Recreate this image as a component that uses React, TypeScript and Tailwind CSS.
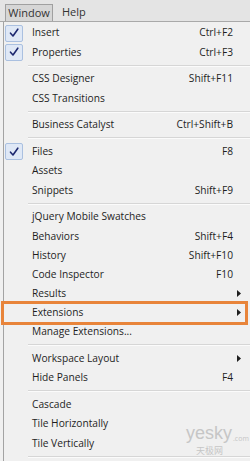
import React from "react";

type Item =
  | { sep: true }
  | { sep?: false; label: string; shortcut?: string; checked?: boolean; sub?: boolean; hl?: boolean };

const items: Item[] = [
  { label: "Insert", shortcut: "Ctrl+F2", checked: true },
  { label: "Properties", shortcut: "Ctrl+F3", checked: true },
  { sep: true },
  { label: "CSS Designer", shortcut: "Shift+F11" },
  { label: "CSS Transitions" },
  { sep: true },
  { label: "Business Catalyst", shortcut: "Ctrl+Shift+B" },
  { sep: true },
  { label: "Files", shortcut: "F8", checked: true },
  { label: "Assets" },
  { label: "Snippets", shortcut: "Shift+F9" },
  { sep: true },
  { label: "jQuery Mobile Swatches" },
  { label: "Behaviors", shortcut: "Shift+F4" },
  { label: "History", shortcut: "Shift+F10" },
  { label: "Code Inspector", shortcut: "F10" },
  { label: "Results", sub: true },
  { label: "Extensions", sub: true, hl: true },
  { label: "Manage Extensions..." },
  { sep: true },
  { label: "Workspace Layout", sub: true },
  { label: "Hide Panels", shortcut: "F4" },
  { sep: true },
  { label: "Cascade" },
  { label: "Tile Horizontally" },
  { label: "Tile Vertically" },
  { sep: true },
];

function Check() {
  return (
    <div className="ml-px w-[18px] h-[17px] bg-[#dfe8f6] border border-[#aac0e0] rounded-[2px] flex items-center justify-center">
      <svg width="10" height="10" viewBox="0 0 10 10">
        <path d="M1.5 5.2 L4 8 L8.8 1.2" fill="none" stroke="#1d2870" strokeWidth="1.6" strokeLinejoin="round" strokeLinecap="round" />
      </svg>
    </div>
  );
}

export default function App() {
  return (
    <div
      className="w-[250px] h-[461px] bg-[#f0f0f0] relative overflow-hidden text-[10.2px] text-[#1e1e1e]"
      style={{ fontFamily: '"Open Sans", "Noto Sans", sans-serif' }}
    >
      <div className="h-[22px] bg-[#e4e4e4] border-b border-[#a9a9a9] flex items-end text-[11px]">
        <div className="ml-[5px] w-[48px] h-[17px] bg-[#d6d6d6] border border-b-0 border-[#a0a0a0] flex items-center justify-center text-[#333]">
          Window
        </div>
        <div className="ml-[9px] h-[17px] flex items-center text-[#333]">Help</div>
      </div>
      <div className="ml-[3px] border-l border-[#a3a3a3] pt-[1.5px] h-[440px]">
        {items.map((it, i) =>
          it.sep ? (
            <div key={i} className="h-[7.6px] flex flex-col justify-center pl-[24px]">
              <div className="h-px bg-[#d6d6d6]" />
              <div className="h-px bg-[#fbfbfb]" />
            </div>
          ) : (
            <div key={i} className="h-[19.2px] flex items-center relative">
              <div className="w-[24px] flex items-center">{it.checked ? <Check /> : null}</div>
              <div className="pl-[4px] flex-1 whitespace-nowrap">{it.label}</div>
              {it.shortcut ? <div className="pr-[17px] whitespace-nowrap">{it.shortcut}</div> : null}
              {it.sub ? (
                <div className="pr-[9px]">
                  <svg width="4" height="7" viewBox="0 0 4 7">
                    <path d="M0 0 L4 3.5 L0 7 Z" fill="#1e1e1e" />
                  </svg>
                </div>
              ) : null}
              {it.hl ? (
                <div className="absolute left-[-3px] right-[2px] top-[-2px] bottom-[-2px] border-[3px] border-[#e8843a]" />
              ) : null}
            </div>
          )
        )}
      </div>
      <div className="absolute left-[186px] top-[424px] text-[#c6c6c6] leading-none">
        <div className="flex items-end">
          <span className="text-[18px] leading-[19px]" style={{ fontFamily: '"Liberation Sans", sans-serif' }}>yesky</span>
          <span className="text-[7px] leading-[9px] ml-px">.com</span>
        </div>
        <div className="text-[9px] leading-[10px] ml-[10px] mt-[3px]" style={{ fontFamily: '"Noto Sans CJK SC", sans-serif' }}>天极网</div>
      </div>
    </div>
  );
}
